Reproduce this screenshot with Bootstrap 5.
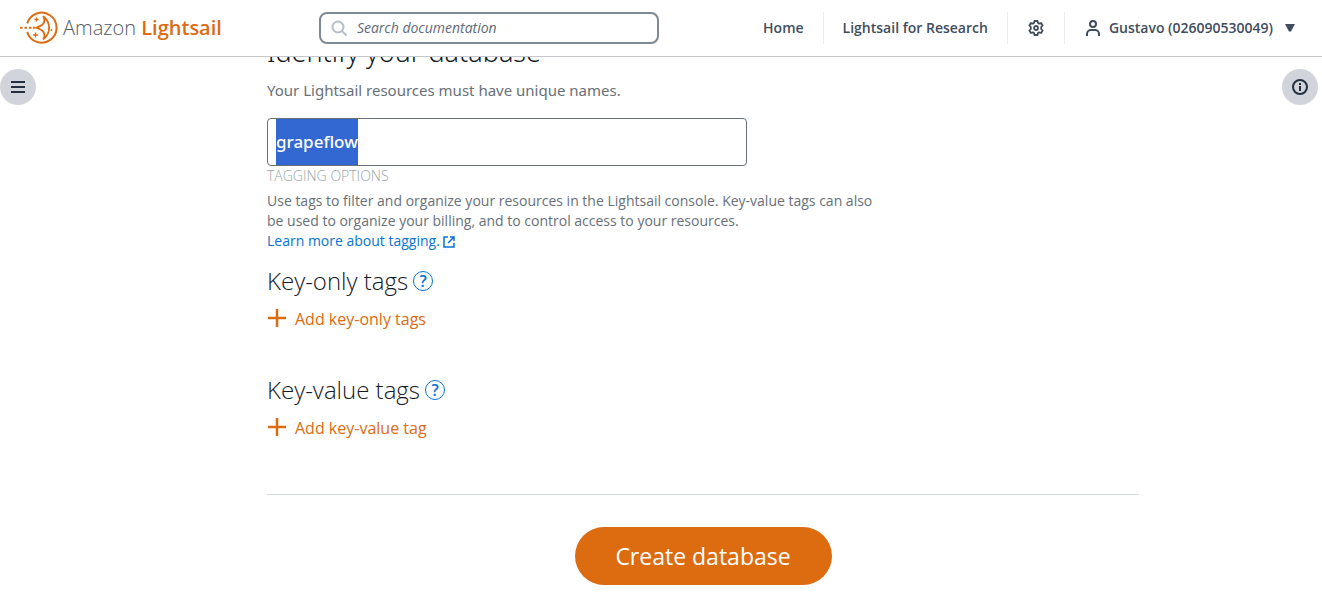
<!DOCTYPE html>
<html lang="en">
<head>
<meta charset="utf-8">
<meta name="viewport" content="width=device-width, initial-scale=1">
<title>Create a database - Amazon Lightsail</title>
<link href="https://cdn.jsdelivr.net/npm/bootstrap@5.3.0/dist/css/bootstrap.min.css" rel="stylesheet">
<style>
  body { font-family: "Open Sans", "Noto Sans", sans-serif; font-size: 14px; line-height: 20px; color: #687078; background: #fff; }
  a { text-decoration: none; color: #0972d3; }
  .topbar { height: 57px; border-bottom: 1px solid #c6c6cd; }
  .brand-link { margin-left: 17px; margin-right: 97px; }
  .brand-text { font-size: 20px; line-height: 28px; font-weight: 300; color: #545b64; }
  .brand-text strong { font-weight: 600; color: #dd6b10; }
  .search-box { width: 340px; height: 32px; border: 2px solid #7d8998; border-radius: 8px; color: #b6bec9; }
  .search-box input { font-size: 14px; font-style: italic; color: #414d5c; outline: 0; }
  .search-box input::placeholder { color: #5f6b7a; opacity: 1; }
  .top-links { margin-right: 3px; }
  .top-links a, .top-links button { height: 32px; font-weight: 600; color: #414d5c; border: 0; background: none; white-space: nowrap; }
  .top-links a { padding: 0 19px; }
  .top-links button { padding: 0 20px; }
  .top-links li + li { border-left: 1px solid #e9ebed; }
  .round-btn { width: 36px; height: 36px; margin-top: 12px; border: 0; border-radius: 50%; background: #d1d5db; color: #232f3e; }
  .form-area { max-width: 960px; padding-left: 88px; }
  .section-title { font-family: "Noto Sans", sans-serif; font-size: 27px; line-height: 36px; font-weight: 300; color: #16191f; margin-top: -23px; }
  .intro { font-family: "Noto Sans", sans-serif; font-size: 15px; line-height: 24px; }
  .name-input { max-width: 480px; height: 48px; padding: 0 8px 2px; font: 500 17px/44px "Noto Sans", sans-serif; color: #16191f; border: 1px solid #687078; border-radius: 4px; }
  .name-input:focus { color: #16191f; border-color: #687078; box-shadow: none; }
  .name-input::selection { background: #3367d1; color: #fff; }
  .name-input.all-selected { background: linear-gradient(#3367d1, #3367d1) 8px 0 / 82px 100% no-repeat; }
  .tag-label { font-weight: 300; color: #95a5a6; }
  .tag-help { max-width: 620px; margin-top: 5px; }
  .tag-title { font-size: 24px; line-height: 32px; font-weight: 300; color: #16191f; margin-bottom: 10px; }
  .tag-group { margin-top: 14px; }
  .tag-group + .tag-group { margin-top: 43px; }
  .help-btn { width: 20px; height: 20px; margin-left: 5px; border: 1px solid #0972d3; border-radius: 50%; color: #0972d3; background: none; font: 600 16px/18px "Open Sans", sans-serif; }
  .add-btn { font-size: 16px; line-height: 24px; color: #dd6b10; border: 0; background: none; }
  .rule { margin-top: 54px; padding-top: 32px; border-top: 1px solid #d5dbdb; }
  .create-btn { width: 257px; height: 58px; border: 0; border-radius: 29px; background: #dd6b10; color: #fff; font-size: 23px; font-weight: 500; }
</style>
</head>
<body>
<header class="topbar sticky-top bg-white d-flex align-items-center">
  <a href="#" class="brand-link d-flex align-items-center flex-shrink-0">
    <svg width="46" height="36" viewBox="0 0 46 36" fill="none" stroke="#dd6b10" aria-hidden="true">
      <path d="M10.200 13.400A15 15 0 1 1 10.200 22" stroke-width="2"/>
      <path d="M3 17.700h2.500M7.500 17.700h2.500M12 17.700h2.500M16 17.700h2.500" stroke-width="2"/>
      <path d="M26.500 6.500C34 12.500 34 23 26.500 29 29 24 27 20.500 19.500 17.700 27 15 29 11.500 26.500 6.500z" stroke-width="1.800" stroke-linejoin="round"/>
      <path d="M19.500 7.500v4M17.500 9.500h4M18.500 22.500v5M16 25h5" stroke-width="1.400"/>
      <circle cx="34.500" cy="20" r="1" fill="#dd6b10" stroke="none"/>
    </svg>
    <span class="brand-text">Amazon <strong>Lightsail</strong></span>
  </a>
  <label class="search-box d-flex align-items-center flex-shrink-0">
    <svg class="mx-2 flex-shrink-0" width="20" height="20" viewBox="0 0 20 20" fill="none" stroke="currentColor" stroke-width="2" aria-hidden="true"><circle cx="9" cy="9" r="5.500"/><path d="M13 13l4.500 4.500"/></svg>
    <input type="search" class="border-0 bg-transparent p-0 flex-grow-1" placeholder="Search documentation" aria-label="Search documentation">
  </label>
  <ul class="top-links list-unstyled d-flex mb-0 ms-auto">
    <li><a href="#" class="d-flex align-items-center">Home</a></li>
    <li><a href="#" class="d-flex align-items-center">Lightsail for Research</a></li>
    <li><button type="button" class="d-flex align-items-center" aria-label="Settings">
      <svg width="16" height="16" viewBox="0 0 16 16" fill="none" stroke="currentColor" stroke-width="1.800" stroke-linejoin="round"><path d="M6.500 1h3l.4 1.900 1.300.7 1.900-.6 1.500 2.500L13.200 7v2l1.400 1.500-1.500 2.500-1.900-.6-1.300.7-.4 1.900h-3l-.4-1.900-1.300-.7-1.900.6-1.500-2.500L2.800 9V7L1.400 5.500 2.900 3l1.900.6 1.300-.7z"/><circle cx="8" cy="8" r="2"/></svg>
    </button></li>
    <li><button type="button" class="d-flex align-items-center gap-2">
      <svg width="16" height="16" viewBox="0 0 16 16" fill="none" stroke="currentColor" stroke-width="2"><circle cx="8" cy="4" r="3"/><path d="M2 16v-2a4 4 0 0 1 4-4h4a4 4 0 0 1 4 4v2"/></svg>
      Gustavo (026090530049)
      <svg class="mx-1" width="10" height="8" viewBox="0 0 10 8" fill="currentColor"><path d="M0 0h10L6 7.500H4z"/></svg>
    </button></li>
  </ul>
</header>

<main class="d-flex align-items-start">
  <button type="button" class="round-btn d-flex align-items-center justify-content-center flex-shrink-0 p-0" aria-label="Open navigation">
    <svg width="14" height="12" viewBox="0 0 14 12" stroke="currentColor" stroke-width="2"><path d="M0 1h14M0 6h14M0 11h14"/></svg>
  </button>
  <form class="form-area flex-grow-1 mx-auto" onsubmit="return false">
    <h1 class="section-title mb-2">Identify your database</h1>
    <label class="intro d-block mb-3" for="dbname">Your Lightsail resources must have unique names.</label>
    <input id="dbname" class="name-input form-control" type="text" value="grapeflow">
    <div class="tag-label">TAGGING OPTIONS</div>
    <div class="tag-help">
      Use tags to filter and organize your resources in the Lightsail console. Key-value tags can also be used to organize your billing, and to control access to your resources.<br>
      <a href="#">Learn more about tagging.
        <svg class="align-text-top" width="12" height="18" viewBox="0 0 12 18" fill="none" stroke="currentColor" stroke-width="1.500"><path d="M5 6H1v10h10v-4M7 6h4v4M11 6l-6 6"/></svg></a>
    </div>
    <section class="tag-group">
      <h2 class="tag-title d-flex align-items-center">Key-only tags <button type="button" class="help-btn p-0" aria-label="About key-only tags">?</button></h2>
      <button type="button" class="add-btn d-flex align-items-center p-0"><svg class="me-2" width="20" height="20" viewBox="0 0 20 20" stroke="currentColor" stroke-width="2.500"><path d="M1 9h18M10 0v18"/></svg>Add key-only tags</button>
    </section>
    <section class="tag-group">
      <h2 class="tag-title d-flex align-items-center">Key-value tags <button type="button" class="help-btn p-0" aria-label="About key-value tags">?</button></h2>
      <button type="button" class="add-btn d-flex align-items-center p-0"><svg class="me-2" width="20" height="20" viewBox="0 0 20 20" stroke="currentColor" stroke-width="2.500"><path d="M1 9h18M10 0v18"/></svg>Add key-value tag</button>
    </section>
    <div class="rule text-center">
      <button type="submit" class="create-btn">Create database</button>
    </div>
  </form>
  <button type="button" class="round-btn d-flex align-items-center justify-content-center flex-shrink-0 p-0 me-1" aria-label="Open help">
    <svg width="16" height="16" viewBox="0 0 16 16" fill="none" stroke="currentColor" stroke-width="2"><circle cx="8" cy="8" r="7"/><path d="M8 7v5M8 4v2"/></svg>
  </button>
</main>
<script src="https://cdn.jsdelivr.net/npm/bootstrap@5.3.0/dist/js/bootstrap.bundle.min.js"></script>
<script>
  // The suggested name starts selected, with a highlight as tall as the field.
  const nameInput = document.getElementById('dbname');
  nameInput.focus({ preventScroll: true });
  nameInput.select();
  nameInput.classList.add('all-selected');
  for (const type of ['pointerdown', 'keydown', 'input', 'blur']) {
    nameInput.addEventListener(type, () => nameInput.classList.remove('all-selected'));
  }
</script>
</body>
</html>
